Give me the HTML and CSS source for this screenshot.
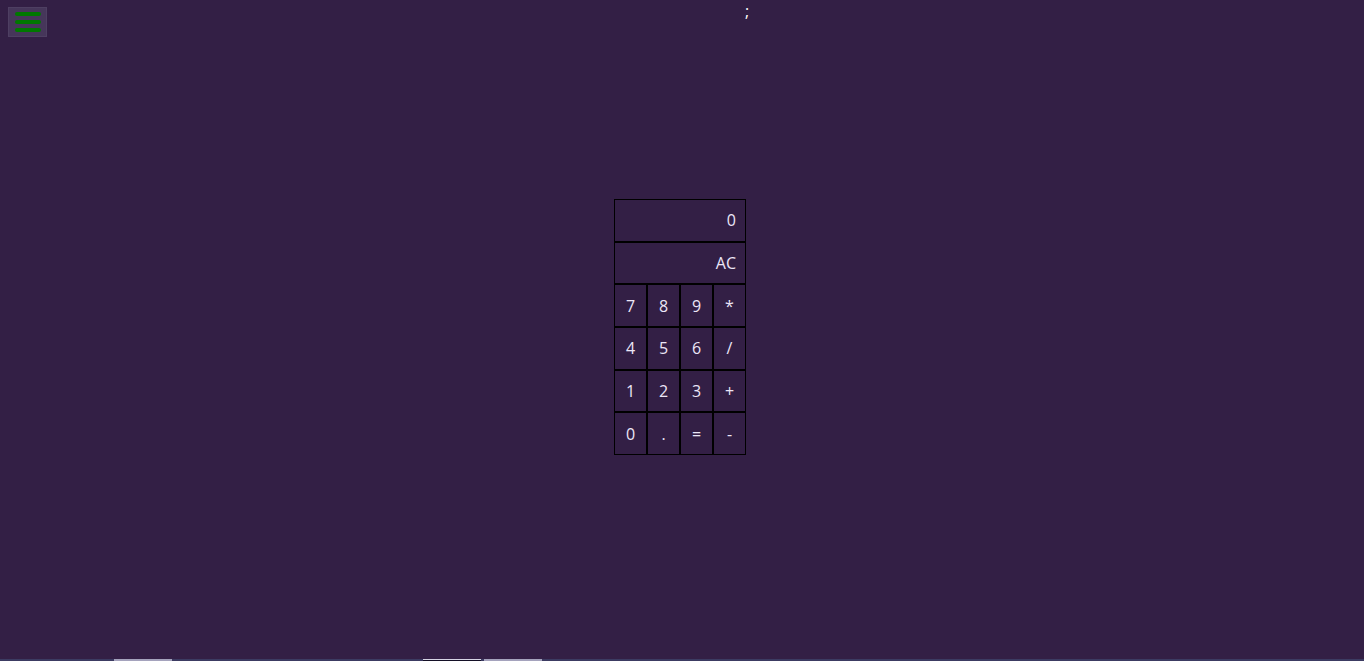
FILE: index.html
```html
<!DOCTYPE html>
<html lang="en">
<head>
    <meta charset="UTF-8">
    <meta name="viewport" content="width=device-width, initial-scale=1.0">
    <title>Calculator</title>
    <link rel="stylesheet" href="styles.css">
</head>
<body>
    <div id="page">
        <header id="top-bar">
            <button id="menu-btn" aria-label="Menu">
                <span class="bar"></span>
                <span class="bar"></span>
                <span class="bar"></span>
            </button>
            <span id="stray">;</span>
        </header>
        <main id="main">
            <div id="calculator">
                <div class="screen" id="display">0</div>
                <button class="screen" id="clear">AC</button>
                <div id="keys">
                    <button class="key">7</button>
                    <button class="key">8</button>
                    <button class="key">9</button>
                    <button class="key">*</button>
                    <button class="key">4</button>
                    <button class="key">5</button>
                    <button class="key">6</button>
                    <button class="key">/</button>
                    <button class="key">1</button>
                    <button class="key">2</button>
                    <button class="key">3</button>
                    <button class="key">+</button>
                    <button class="key">0</button>
                    <button class="key">.</button>
                    <button class="key">=</button>
                    <button class="key">-</button>
                </div>
            </div>
        </main>
    </div>
    <footer id="bottom-strip">
        <span class="tab light"></span>
        <span class="tab dark"></span>
        <span class="tab light"></span>
    </footer>

    <script>
        const display = document.getElementById('display');
        let expr = '';

        document.querySelectorAll('.key').forEach((key) => {
            key.addEventListener('click', () => {
                const v = key.textContent;
                if (v === '=') {
                    try {
                        expr = String(Function('return (' + expr + ')')());
                    } catch (e) {
                        expr = '';
                    }
                } else {
                    expr += v;
                }
                display.textContent = expr || '0';
            });
        });

        document.getElementById('clear').addEventListener('click', () => {
            expr = '';
            display.textContent = '0';
        });
    </script>
</body>
</html>
```

FILE: styles.css
```css
html, body {
    margin: 0;
    padding: 0;
    height: 100%;
    overflow: hidden;
}
body {
    background-color: #331f45;
    color: #ece6f7;
    font-family: "Open Sans", "Noto Sans", sans-serif;
    font-size: 16px;
}
#page {
    height: 659px;
    display: flex;
    flex-direction: column;
}
#top-bar {
    display: flex;
    align-items: flex-start;
    height: 44px;
}
#menu-btn {
    margin: 7px 0 0 8px;
    width: 39px;
    height: 30px;
    padding: 0;
    background-color: #46365a;
    border: 1px solid #4e3f62;
    display: flex;
    flex-direction: column;
    align-items: center;
    justify-content: center;
    gap: 4px;
    cursor: pointer;
}
#menu-btn .bar {
    display: block;
    width: 26px;
    height: 4px;
    border-radius: 2px;
    background-color: #007800;
}
#stray {
    margin-left: 698px;
    margin-top: 2px;
    line-height: 18px;
    color: #ffffff;
}
#main {
    flex: 1;
    display: flex;
    justify-content: center;
    align-items: flex-start;
    padding-top: 155px;
    padding-right: 4px;
}
#calculator {
    width: 132px;
    display: flex;
    flex-direction: column;
}
.screen {
    box-sizing: border-box;
    width: 132px;
    height: 42.7px;
    padding: 0 9px 0 0;
    border: 1px solid #000;
    background: transparent;
    color: inherit;
    font: inherit;
    display: flex;
    align-items: center;
    justify-content: flex-end;
    text-align: right;
}
#keys {
    display: grid;
    grid-template-columns: repeat(4, 33px);
    grid-auto-rows: 42.7px;
}
.key {
    box-sizing: border-box;
    border: 1px solid #000;
    background: transparent;
    color: inherit;
    font: inherit;
    padding: 0;
    cursor: pointer;
}
.key:hover, .screen:hover {
    background-color: #3d2852;
}
#bottom-strip {
    height: 2px;
    background-color: #3c3b62;
    display: flex;
    padding-left: 114px;
}
.tab {
    display: block;
    width: 58px;
    height: 2px;
}
.tab.light {
    background-color: #a5a3bd;
}
.tab.dark {
    background-color: #141026;
    border-top: 1px solid #d6d4e4;
    box-sizing: border-box;
    margin-left: 251px;
    margin-right: 3px;
}
```
